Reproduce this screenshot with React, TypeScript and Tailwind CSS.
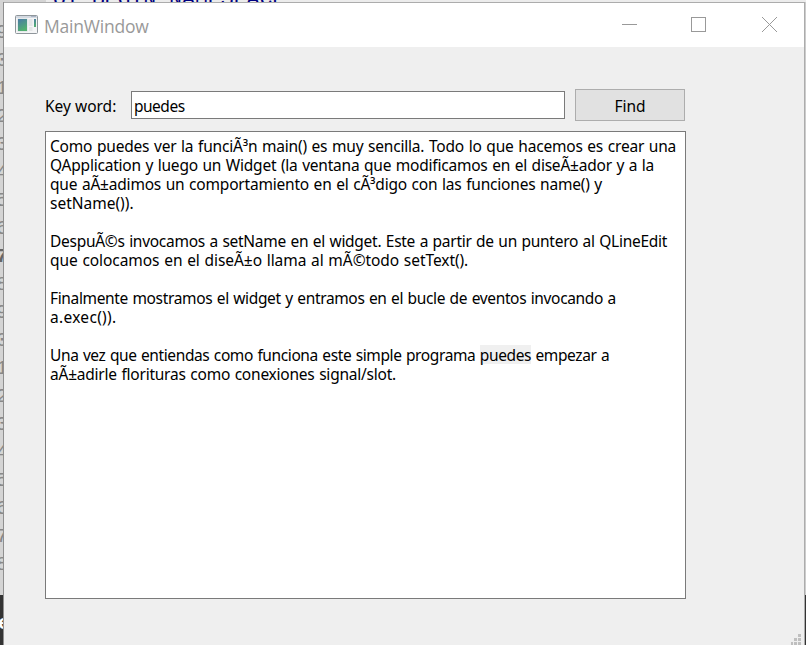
import React from "react";

const gutter = Array.from({ length: 20 }, (_, i) => (i + 9) % 10);

type Line = { text: string; mark?: string; rest?: string; track?: string };

const lines: Line[] = [
  { text: "Como puedes ver la funciÃ³n main() es muy sencilla. Todo lo que hacemos es crear una", track: "tracking-[-0.19px]" },
  { text: "QApplication y luego un Widget (la ventana que modificamos en el diseÃ±ador y a la", track: "tracking-[-0.22px]" },
  { text: "que aÃ±adimos un comportamiento en el cÃ³digo con las funciones name() y", track: "tracking-[-0.2px]" },
  { text: "setName())." },
  { text: "" },
  { text: "DespuÃ©s invocamos a setName en el widget. Este a partir de un puntero al QLineEdit", track: "tracking-[-0.28px]" },
  { text: "que colocamos en el diseÃ±o llama al mÃ©todo setText().", track: "tracking-[-0.065px]" },
  { text: "" },
  { text: "Finalmente mostramos el widget y entramos en el bucle de eventos invocando a", track: "tracking-[-0.35px]" },
  { text: "a.exec()).", track: "tracking-[0.3px]" },
  { text: "" },
  { text: "Una vez que entiendas como funciona este simple programa ", mark: "puedes", rest: " empezar a", track: "tracking-[-0.39px]" },
  { text: "aÃ±adirle florituras como conexiones signal/slot.", track: "tracking-[-0.225px]" },
];

export default function App() {
  return (
    <div className="relative flex h-[645px] w-[806px] flex-col overflow-hidden bg-[#d4d4d4] font-['Noto_Sans','Open_Sans',sans-serif] text-[15.5px] text-black">
      <div className="ml-[46px] h-[2px] shrink-0 overflow-hidden bg-[#ececec] pl-[7px] font-['Liberation_Mono',monospace] text-[21.5px] leading-[22px] text-[#000080]">
        <div className="-mt-[12px] whitespace-pre">QT_BEGIN_NAMESPACE</div>
      </div>
      <div className="flex min-h-0 flex-1">
        <div className="flex w-[4px] shrink-0 flex-col overflow-hidden border-r border-[#8f8f8f] font-['Liberation_Mono',monospace] text-[20px] leading-[28px] text-[#888]">
          <div className="h-[593px] shrink-0 overflow-hidden pt-[17px]">
            {gutter.map((n, i) => (
              <div key={i} className={i === 8 ? "-ml-[4px] h-[28px] font-bold text-[#666]" : "-ml-[4px] h-[28px]"}>{n}</div>
            ))}
          </div>
          <div className="flex-1 bg-[#333] pt-[15px] text-white">
            <div className="-ml-[2px] font-bold">e</div>
          </div>
        </div>
        <main className="flex w-[801px] shrink-0 flex-col border-t border-r border-[#acacac] bg-[#efefef]">
          <header className="flex h-[44px] shrink-0 items-center bg-white pl-[11px]">
            <svg width="24" height="20" viewBox="0 0 24 20">
              <defs>
                <linearGradient id="pane" x1="0" y1="0" x2="0.4" y2="1">
                  <stop offset="0" stopColor="#4a79a6" />
                  <stop offset="1" stopColor="#52b070" />
                </linearGradient>
              </defs>
              <rect x="0.5" y="0.5" width="22" height="18" rx="1" fill="#f4f5f6" stroke="#8f969b" />
              <path d="M1 2H22" stroke="#d3d9e1" strokeWidth="2" />
              <path d="M16 1.500H21" stroke="#aab4c4" />
              <rect x="2.500" y="3.500" width="10" height="13" fill="#d5dde0" />
              <rect x="3" y="4" width="9" height="12" fill="url(#pane)" />
              <rect x="13.500" y="4" width="4" height="7" fill="#e4e6e7" />
              <rect x="19" y="4" width="2" height="8" fill="url(#pane)" />
              <path d="M14 14H17.500" stroke="#e4e6e7" strokeWidth="4" />
            </svg>
            <h1 className="ml-[5px] flex-1 pt-px font-['Open_Sans','Noto_Sans',sans-serif] text-[17.5px] leading-[24px] tracking-[-0.2px] text-[#999]">MainWindow</h1>
            <svg width="200" height="20" viewBox="0 0 200 20" fill="none" stroke="#999" shapeRendering="crispEdges">
              <path d="M18 9.500H33" />
              <rect x="87.500" y="2.500" width="14" height="14" />
              <path d="M158 2L173 17M173 2L158 17" shapeRendering="auto" />
            </svg>
          </header>
          <section className="pt-[42px] pl-[41px]">
            <div className="flex h-[32px] items-center">
              <label className="w-[86px] pt-[3px] whitespace-nowrap">Key word:</label>
              <div className="flex h-[28px] w-[434px] items-center border border-[#7a7a7a] bg-white pt-[3px] pl-[2px] tracking-[-0.5px]">puedes</div>
              <button className="ml-[10px] h-[32px] w-[110px] border border-[#adadad] bg-[#e1e1e1] pt-[3px]">Find</button>
            </div>
            <div className="mt-[10px] h-[468px] w-[641px] border border-[#7a7a7a] bg-white pt-[4px] pl-[4px]">
              {lines.map((l, i) => (
                <p key={i} className={`h-[19px] leading-[21px] whitespace-pre [word-spacing:0.8px] ${l.track ?? ""}`}>
                  {l.text}
                  {l.mark && <mark className="inline-block h-[19px] bg-[#f0f0f0] align-top">{l.mark}</mark>}
                  {l.rest}
                </p>
              ))}
            </div>
          </section>
        </main>
        <div className="flex w-px flex-col bg-[#333]"><div className="h-[593px] bg-[#ccc]" /></div>
      </div>
      <svg className="absolute right-[5px] bottom-0" width="10" height="11" viewBox="0 0 10 11" fill="#bfbfbf">
        <path d="M7 0h3v3h-3zM7 4h3v3h-3zM7 8h3v3h-3zM3 4h3v3h-3zM3 8h3v3h-3zM0 8h2v3h-2z" />
      </svg>
    </div>
  );
}
